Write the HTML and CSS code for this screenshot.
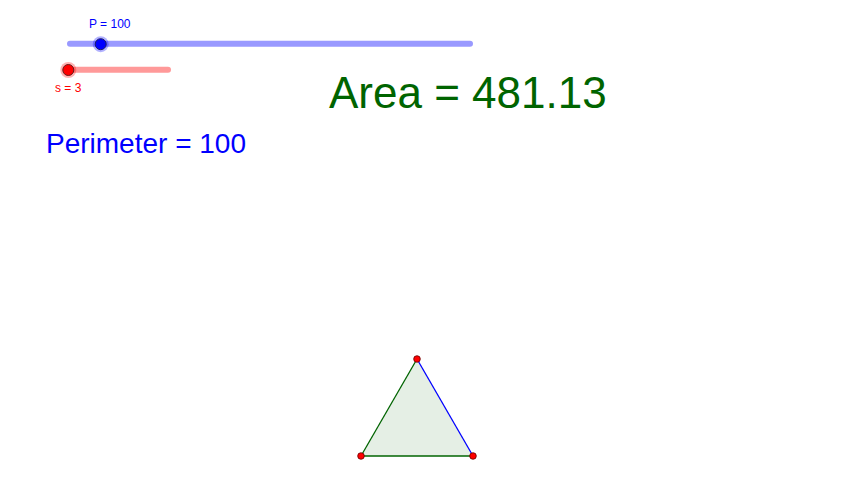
FILE: index.html
```
<!DOCTYPE html>
<html>
<head>
<meta charset="utf-8">
<title>Triangle area</title>
<link rel="stylesheet" href="styles.css">
</head>
<body>
<div class="canvas">
  <svg class="drawing" width="856" height="489" viewBox="0 0 856 489" xmlns="http://www.w3.org/2000/svg">
    <!-- slider P -->
    <line x1="70" y1="43.7" x2="470" y2="43.7" stroke="#9999ff" stroke-width="6" stroke-linecap="round"/>
    <circle cx="100.7" cy="44.2" r="8" fill="#0000ff" fill-opacity="0.3"/>
    <circle cx="100.7" cy="44.2" r="5.5" fill="#0000ff" stroke="#1a1a66" stroke-width="1"/>
    <!-- slider s -->
    <line x1="70" y1="69.7" x2="168" y2="69.7" stroke="#ff9999" stroke-width="6" stroke-linecap="round"/>
    <circle cx="68.3" cy="70" r="8" fill="#ff0000" fill-opacity="0.3"/>
    <circle cx="68.3" cy="70" r="5.5" fill="#ff0000" stroke="#661a1a" stroke-width="1"/>
    <!-- triangle -->
    <polygon points="417,359 361,456 473,456" fill="#006400" fill-opacity="0.1" stroke="none"/>
    <line x1="361" y1="456" x2="417" y2="359" stroke="#006400" stroke-width="1.3"/>
    <line x1="361" y1="456" x2="473" y2="456" stroke="#006400" stroke-width="1.3"/>
    <line x1="417" y1="359" x2="473" y2="456" stroke="#0000ff" stroke-width="1.3"/>
    <circle cx="417" cy="359" r="3.3" fill="#ff0000" stroke="#660000" stroke-width="0.8"/>
    <circle cx="361" cy="456" r="3.3" fill="#ff0000" stroke="#660000" stroke-width="0.8"/>
    <circle cx="473" cy="456" r="3.3" fill="#ff0000" stroke="#660000" stroke-width="0.8"/>
  </svg>
  <span class="label label-p">P = 100</span>
  <span class="label label-s">s = 3</span>
  <span class="label label-area">Area = 481.13</span>
  <span class="label label-perimeter">Perimeter = 100</span>
</div>
</body>
</html>
```
FILE: styles.css
```
html, body {
  margin: 0;
  padding: 0;
  background: #ffffff;
}

.canvas {
  position: relative;
  width: 856px;
  height: 489px;
  overflow: hidden;
  background: #ffffff;
  font-family: "Liberation Sans", Arial, sans-serif;
}

.drawing {
  position: absolute;
  left: 0;
  top: 0;
  display: block;
}

.label {
  position: absolute;
  line-height: 1;
  white-space: nowrap;
}

.label-p {
  left: 89px;
  top: 18.3px;
  font-size: 12px;
  color: #0000ff;
}

.label-s {
  left: 55px;
  top: 82px;
  font-size: 12px;
  color: #ff0000;
}

.label-area {
  left: 329px;
  top: 71px;
  font-size: 44px;
  color: #006400;
}

.label-perimeter {
  left: 46px;
  top: 129.5px;
  font-size: 28px;
  color: #0000ff;
}
```
